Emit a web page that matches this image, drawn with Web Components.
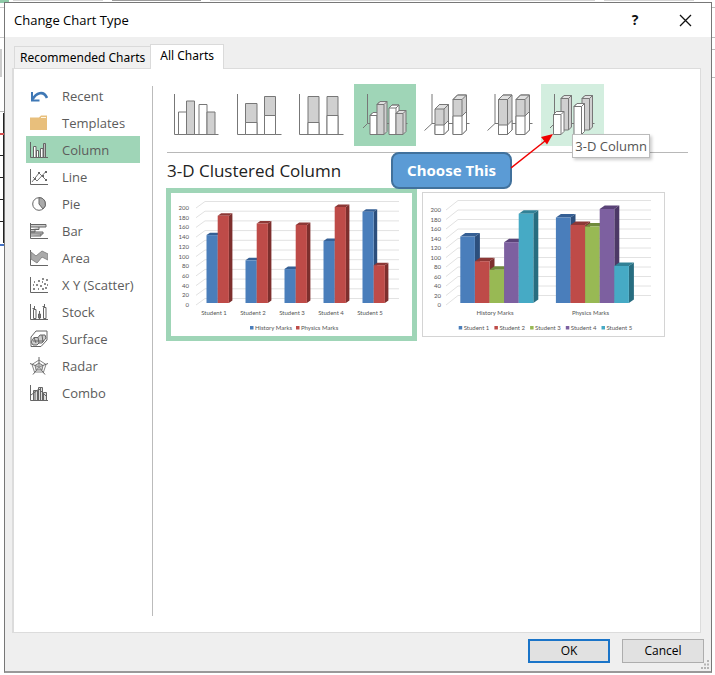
<!DOCTYPE html>
<html lang="en">
<head>
<meta charset="utf-8">
<title>Change Chart Type</title>
<style>
  html, body { margin: 0; min-height: 100vh; }
  body {
    font: 13px/16px "Open Sans", "Noto Sans", sans-serif;
    color: #000;
    display: flex;
    background:
      linear-gradient(#8fcaa8, #8fcaa8) 0 0 / 9px 3px no-repeat,
      linear-gradient(#d6d6d6, #d6d6d6) 13px 0 / 90px 1px no-repeat,
      linear-gradient(#9c9c9c, #9c9c9c) 112px 0 / 89px 1px no-repeat,
      linear-gradient(#d6d6d6, #d6d6d6) 210px 0 / 385px 1px no-repeat,
      linear-gradient(#555, #555) 407px 0 / 89px 1px no-repeat,
      linear-gradient(#d6d6d6, #d6d6d6) 604px 0 / 90px 1px no-repeat,
      linear-gradient(#bbb, #bbb) 100% 7px / 4px 1px no-repeat,
      linear-gradient(#bbb, #bbb) 100% 37px / 4px 1px no-repeat,
      linear-gradient(#bbb, #bbb) 100% 49px / 4px 1px no-repeat,
      linear-gradient(#bbb, #bbb) 100% 77px / 4px 1px no-repeat,
      linear-gradient(#ccc, #ccc) 0 7px / 4px 1px no-repeat,
      linear-gradient(#ccc, #ccc) 0 37px / 4px 1px no-repeat,
      linear-gradient(#ccc, #ccc) 0 49px / 2px 28px no-repeat,
      linear-gradient(#bbb, #bbb) 0 111px / 4px 1px no-repeat,
      linear-gradient(#d45050, #d45050) 0 133px / 4px 2px no-repeat,
      linear-gradient(#4472c4, #4472c4) 0 244px / 4px 2px no-repeat,
      repeating-linear-gradient(#222 0 1px, transparent 1px 22px) 0 155px / 4px 70px no-repeat,
      linear-gradient(#222, #222) 3px 113px / 1px 130px no-repeat,
      #fff;
  }
</style>
</head>
<body>
<chart-dialog heading="Change Chart Type">
  <dialog-tabs slot="tabs"></dialog-tabs>
  <type-list slot="side"></type-list>
  <subtype-bar slot="main"></subtype-bar>
  <chart-previews slot="main" heading="3-D Clustered Column"></chart-previews>
  <call-out slot="main">Choose This</call-out>
</chart-dialog>

<script>
const define = (name, html, setup) => customElements.define(name, class extends HTMLElement {
  constructor() {
    super();
    const t = document.createElement('template');
    t.innerHTML = html;
    this.attachShadow({ mode: 'open' }).append(t.content.cloneNode(true));
  }
  connectedCallback() { if (setup) setup(this, this.shadowRoot); }
});

/* Dialog frame: title bar, tab strip, two-part panel, footer */
define('chart-dialog', `
  <style>
    :host { flex: 1; min-width: 0; display: flex; flex-direction: column; box-sizing: border-box;
      margin: 2px 3px 2px 4px; border: 1px solid #777; border-bottom: 2px solid #999; background: #efefef; }
    header { display: flex; align-items: center; height: 34px; padding: 0 19px 0 9px; background: #fff; }
    h1 { flex: 1; margin: 0; font: inherit; }
    header button { border: 0; padding: 0; background: none; width: 14px; height: 20px; font: bold 14px/18px "Open Sans", sans-serif; color: #111; }
    header button + button { margin-left: 36px; }
    header svg { display: block; margin: auto; }
    .body { flex: 1; display: flex; flex-direction: column; padding: 7px 10px 0 7px; }
    .panel { flex: 1; display: flex; gap: 13px; background: #fff; border: 1px solid #dcdcdc; border-left-width: 2px;
      padding: 14px 12px 16px 12px; margin-bottom: 6px; }
    aside { width: 126px; border-right: 1px solid #bbb; margin-top: 3px; flex: none; }
    main { flex: 1; min-width: 0; position: relative; padding-top: 1px; }
    footer { display: flex; justify-content: flex-end; gap: 12px; padding: 0 7px 8px; position: relative; }
    footer button { width: 82px; height: 24px; box-sizing: border-box; padding: 0; border: 1px solid #adadad; background: #e1e1e1;
      font: 12px/16px "Open Sans", sans-serif; color: #000; }
    footer button.default { border: 2px solid #1a74c8; }
    .grip { position: absolute; right: 1px; bottom: 1px; }
  </style>
  <header><h1></h1><button aria-label="Help">?</button><button aria-label="Close"><svg width="13" height="13"><path d="M1 1L12 12M12 1L1 12" stroke="#111" stroke-width="1.3"/></svg></button></header>
  <div class="body">
    <slot name="tabs"></slot>
    <div class="panel"><aside><slot name="side"></slot></aside><main><slot name="main"></slot></main></div>
  </div>
  <footer><button class="default">OK</button><button>Cancel</button>
    <svg class="grip" width="10" height="10" fill="#b4b4b4"><path d="M7 0h2v2h-2zM4 3.500h2v2h-2zM7 3.500h2v2h-2zM1 7h2v2h-2zM4 7h2v2h-2zM7 7h2v2h-2z"/></svg>
  </footer>`,
  (el, root) => { root.querySelector('h1').textContent = el.getAttribute('heading'); });

define('dialog-tabs', `
  <style>
    :host { display: flex; align-items: flex-end; padding-left: 2px; margin-bottom: -1px; position: relative; }
    button { font: 12px/16px "Noto Sans", sans-serif; color: #000; box-sizing: border-box; height: 22px; padding: 0 5px;
      border: 1px solid #dadada; border-bottom: 0; background: #f0f0f0; margin-bottom: 1px; border-right: 0; white-space: nowrap; }
    .on { height: 25px; margin: 0; border-right: 1px solid #dadada; background: #fff; padding: 0 9px 2px; }
  </style>
  <button role="tab">Recommended Charts</button><button role="tab" class="on" aria-selected="true">All Charts</button>`);

/* 18px glyphs of the category list */
const axis = '<path d="M.5 1V16.500H18"/>';
const glyphs = {
  Recent: '<path d="M2 5V13.500H9.500" stroke="#3f78b5" stroke-width="2"/><path d="M2.500 12.500C6 6 13.500 3 17 11" stroke="#3f78b5" stroke-width="2.600"/>',
  Templates: '<path d="M0 3.500H9L11 1.500H17V16H0Z" fill="#e8bf7c" stroke="none"/><path d="M11 3.500H16" stroke="#fff6e3"/>',
  Column: axis + '<path d="M3.500 16V5.500H6V16M6.500 16V9.500H8.500V16" fill="#fff"/><path d="M10.500 16V7.500H13V16" fill="#fff"/><path d="M13.500 16V2.500H15.500V16" fill="#bbb"/>',
  Line: axis + '<path d="M2 14L9 5L16 12M3 9L7 13L16 3.500" stroke-width=".9"/><path d="M8 4h2v2h-2zM12 7h2v2h-2zM15 3h2v2h-2zM15 11h2v2h-2zM4 10h2v2h-2z" fill="#666" stroke="none"/>',
  Pie: '<circle cx="9" cy="9" r="6.300" fill="#fff"/><path d="M9 2.700V9L13 14A6.300 6.300 0 0 0 9 2.700Z" fill="#aaa"/>',
  Bar: axis + '<path d="M1 2.500H16V5H1M1 7.500H9V5M1 7.500H5V10H1M1 10H13V12H1M1 14H11V12" fill="#ccc"/>',
  Area: axis + '<path d="M1 3L6 7L12 2L18 5V11L12 8L7 14L1 10Z" fill="#aaa" stroke="#888"/>',
  'X Y (Scatter)': axis + '<path d="M3 13h2M6 9h2M4 6h1M8 5h2M12 3h2M16 4h2M14 8h2M10 10h2M8 13h1M12 13h2M15 12h2M3 9h1M12 6h1M17 9h1" stroke-width="1.500"/>',
  Stock: axis + '<path d="M4.500 3V16M9.500 8V16M14.500 1V16M2.500 5.500H5M12.500 3.500H15" /><path d="M3.500 6.500H6V15.500H3.500ZM13.500 4.500H16V15.500H13.500Z" fill="#fff"/><path d="M8.500 11H10.500V15H8.500Z" fill="#777"/>',
  Surface: '<path d="M1 7L6 1H17V10L11 16.500H1Z"/><path d="M1 12L4 7.500H8L10 5H15L16 8L12 13H9L7 15H3ZM4 7.500L6 13M8 7.500L9 13M12 5L13 12M3 11H14" fill="#ccc"/>',
  Radar: '<path d="M9 3L16 7.500L13.500 15H4.500L2 7.500Z" stroke-width=".8"/><path d="M9 0V10L18 6.500M9 10L15 17.500M9 10L3 17.500M9 10L0 6.500"/><path d="M9 6L13 8.500L12 13H6L5 8.500Z" fill="#aaa" fill-opacity=".6" stroke-width=".8"/>',
  Combo: axis + '<path d="M3.500 16V6.500H7.500V16M8.500 16V3.500H12.500V16M13.500 16V8.500H16.500V16" fill="#ddd"/><path d="M1 11L5 8L9 5L13 9L17 13M5 16V7M10.500 16V4"/>'
};
define('type-list', `
  <style>
    :host { display: block; margin-top: -4px; }
    button { display: flex; align-items: center; gap: 14px; width: 114px; height: 27px; border: 0; padding: 0 0 0 4px;
      background: none; font: 13px/16px "Open Sans", sans-serif; color: #5c5c5c; white-space: nowrap; }
    button.on { background: #9fd5b7; }
    svg { flex: none; fill: none; stroke: #666; }
  </style><nav></nav>`,
  (el, root) => { root.querySelector('nav').innerHTML = Object.entries(glyphs).map(([n, g]) =>
    `<button${n === 'Column' ? ' class="on" aria-pressed="true"' : ''}><svg width="18" height="18" aria-hidden="true">${g}</svg>${n}</button>`).join(''); });

/* One column, flat or with depth d; an optional split divides grey (top) from white */
function column(x, top, w, fill, { d = 0, base = 50.5, split } = {}) {
  const r = x + w;
  let s = `<path fill="${fill}" d="M${x} ${base}V${top}l${d} ${-d}h${w}V${base - d}L${r} ${base}Z"/>`;
  if (split) s += `<path fill="#fff" d="M${x} ${base}V${split}H${r}l${d} ${-d}V${base - d}L${r} ${base}Z"/>`;
  if (d) s += `<path fill="#fff" fill-opacity=".35" d="M${x} ${top}H${r}l${d} ${-d}h${-w}Z"/><path fill="none" d="M${r} ${top}V${base}"/>`;
  return s;
}
const G = '#d0d0d0', W = '#fff';
const flat = '<path fill="none" d="M8.500 10V50.500H52.500"/>';
const deep = (x, y) => `<path fill="none" d="M${x} 10V39.500L${x === 16 ? 8.5 : 9} ${y}M${x} 39.500H53.500"/>`;
const subtypes = [
  ['Clustered Column', flat + column(12.5, 28, 8, W) + column(20.5, 17, 8, G) + column(33, 20.5, 8, W) + column(41, 28, 8, G)],
  ['Stacked Column', flat + column(16.5, 19.5, 11.5, G, { split: 38.5 }) + column(35.5, 12.5, 11, G, { split: 31.5 })],
  ['100% Stacked Column', flat + column(17, 12.5, 11, G, { split: 38.5 }) + column(36, 12.5, 11, G, { split: 31.5 })],
  ['3-D Clustered Column', deep(13.5, 44) + column(16, 31.5, 7, W, { d: 3 }) + column(23, 20.5, 7, G, { d: 3 }) + column(35, 24, 7, W, { d: 3 }) + column(42, 29.5, 7, G, { d: 3 })],
  ['3-D Stacked Column', deep(16, 46.5) + column(19, 25, 9, G, { d: 4.5, split: 41 }) + column(37, 15.5, 9, G, { d: 4.5, split: 32 })],
  ['3-D 100% Stacked Column', deep(16, 46.5) + column(19.5, 15.5, 9, G, { d: 4.5, split: 41 }) + column(37, 15.5, 9, G, { d: 4.5, split: 32 })],
  ['3-D Column', deep(13.5, 44) + column(20, 14.5, 7.5, G, { d: 3, base: 46 }) + column(41, 14.5, 7.5, G, { d: 3, base: 46 }) + column(12.5, 30.5, 7.5, W, { d: 3 }) + column(33, 22.5, 7.5, W, { d: 3 })]
];
define('subtype-bar', `
  <style>
    :host { display: block; height: 68px; border-bottom: 1px solid #b8b8b8; margin-left: 1px; }
    .row { display: grid; grid-template-columns: repeat(7, 1fr); width: 438px; margin-left: -1px; position: relative; }
    button { border: 0; padding: 0; height: 62px; background: none; }
    button.on { background: #9fd5b7; }
    button.hover { background: #d3eedf; }
    svg { display: block; stroke: #777; }
    .tip { position: absolute; right: -46px; top: 50px; border: 1px solid #bbb; background: #fff; color: #555;
      padding: 3px 2px; line-height: 16px; box-shadow: 2px 2px 3px #0003; white-space: nowrap; z-index: 2; }
  </style><div class="row"></div>`,
  (el, root) => { root.querySelector('.row').innerHTML = subtypes.map(([n, s], i) =>
    `<button aria-label="${n}" class="${i === 3 ? 'on' : i === 6 ? 'hover' : ''}"><svg width="62" height="62">${s}</svg></button>`).join('') + '<span class="tip" role="tooltip">3-D Column</span>'; });

/* 3-D clustered column chart drawn from its series */
const palette = ['#4a7ebb', '#be4b48', '#98b954', '#7d60a0', '#46aac5'];
const tops = ['#355f94', '#8c3836', '#6f8a3c', '#5a4378', '#318196'];
const sides = ['#2c4f7d', '#7d2f2d', '#5f7733', '#4c3866', '#276d80'];
define('column-chart', `
  <style>:host { display: block; } svg { display: block; width: 100%; height: auto; font-family: Lato, sans-serif; font-size: 6px; fill: #555; }</style><div></div>`,
  (el, root) => {
    const c = el.data, n = c.series.length;
    let s = '';
    for (let v = 0; v <= 200; v += 20) {
      const y = c.zero - v * c.unit;
      s += `<path fill="none" stroke="#e2e2e2" d="M${c.left} ${y}l${c.dx} ${-c.dy}H228"/><text x="18" y="${y + 2}" text-anchor="end">${v}</text>`;
    }
    c.groups.forEach((g, i) => {
      c.series.forEach((_, j) => {
        const x = c.first + i * c.pitch + j * c.w, h = c.values[j][i] * c.unit, b = 110, t = b - h, r = x + c.w;
        s += `<path fill="${tops[j]}" d="M${x} ${t}l${c.d} ${-c.d * .7}H${r + c.d}L${r} ${t}Z"/>
          <path fill="${sides[j]}" d="M${r} ${t}l${c.d} ${-c.d * .7}V${b - c.d * .7}L${r} ${b}Z"/>
          <path fill="${palette[j]}" d="M${x} ${t}H${r}V${b}H${x}Z"/>`;
      });
      s += `<text x="${c.label + i * c.pitch}" y="122" text-anchor="middle">${g}</text>`;
    });
    c.series.forEach((name, j) => {
      const x = c.key + j * c.keyPitch;
      s += `<path fill="${palette[j]}" d="M${x} 133h3.500v3.500h-3.500Z"/><text x="${x + 5}" y="137">${name}</text>`;
    });
    root.querySelector('div').innerHTML = `<svg viewBox="0 0 241 143" role="img">${s}</svg>`;
  });

const history = [140, 88, 70, 128, 188], physics = [180, 164, 161, 198, 78];
const students = ['Student 1', 'Student 2', 'Student 3', 'Student 4', 'Student 5'];
define('chart-previews', `
  <style>
    :host { display: block; }
    h2 { margin: 0; font: 17px/35px "Open Sans", sans-serif; color: #222; padding-left: 1px; }
    .row { display: flex; align-items: center; gap: 5px; }
    button { display: block; box-sizing: border-box; padding: 0; background: #fff; border: 1px solid #d4d4d4; width: 243px; }
    button.on { border: 5px solid #9fd5b7; width: 251px; }
  </style><h2></h2><div class="row"></div>`,
  (el, root) => {
    root.querySelector('h2').textContent = el.getAttribute('heading');
    [{ series: ['History Marks', 'Physics Marks'], groups: students, values: [history, physics],
       zero: 112, unit: .485, left: 25, dx: 9, dy: 6.5, first: 35.5, pitch: 39, w: 11.2, d: 3.5, label: 43, key: 79, keyPitch: 46 },
     { series: students, groups: ['History Marks', 'Physics Marks'], values: history.map((h, i) => [h, physics[i]]),
       zero: 112, unit: .475, left: 23, dx: 12, dy: 9.5, first: 37.3, pitch: 95.6, w: 14.6, d: 5, label: 72, key: 35.7, keyPitch: 35.7 }
    ].forEach((data, i) => {
      const b = document.createElement('button'), c = document.createElement('column-chart');
      if (!i) b.className = 'on';
      c.data = data;
      b.append(c);
      root.querySelector('.row').append(b);
    });
  });

/* Annotation bubble with its arrow, laid over the panel */
define('call-out', `
  <style>
    :host { position: absolute; left: 225px; top: 69px; z-index: 3; }
    div { box-sizing: border-box; width: 121px; height: 37px; border: 2px solid #41719c; border-radius: 8px; background: #5b9bd5;
      color: #fff; font: bold 15px/33px "Noto Sans", sans-serif; text-align: center; white-space: nowrap; }
    svg { position: absolute; left: 120px; top: -19px; }
  </style>
  <div><slot></slot></div>
  <svg width="44" height="38"><path d="M0 35L34 8" stroke="#f00000" stroke-width="1.500"/><path d="M42 1L36 11.500L30 4Z" fill="#f00000"/></svg>`);
</script>
</body>
</html>
